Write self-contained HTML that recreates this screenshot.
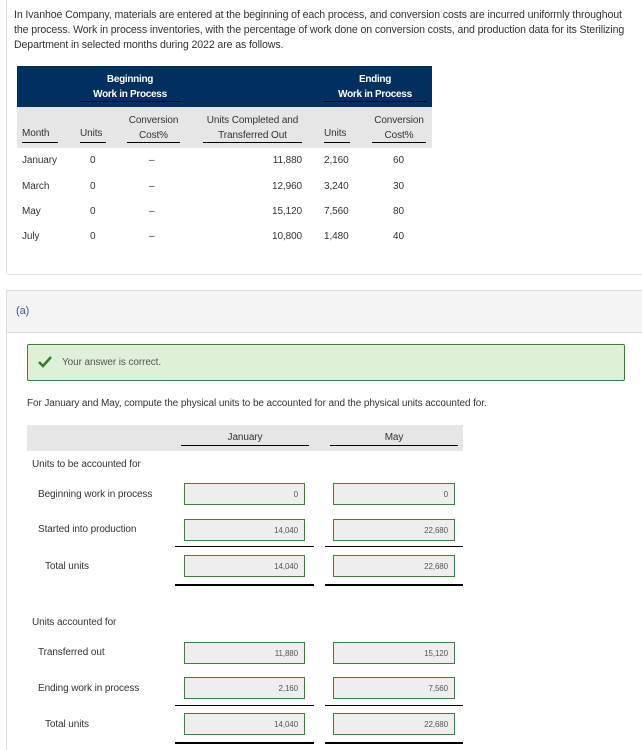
<!DOCTYPE html>
<html><head><meta charset="utf-8"><style>
*{margin:0;padding:0;box-sizing:border-box}
body{width:642px;height:747px;background:#fff;font-family:"Liberation Sans",sans-serif;color:#333;position:relative;overflow:hidden;font-size:10px;letter-spacing:-0.1px}
.a{position:absolute;white-space:nowrap}
.card1{position:absolute;left:6px;top:-2px;width:640px;height:277px;border:1px solid #ddd;border-radius:3px}
.hd{position:absolute;left:17px;top:66px;width:415px;height:41px;background:#00305f}
.sub{position:absolute;left:17px;top:107px;width:415px;height:41px;background:#e6e6e6}
.w{color:#fff;font-weight:bold;text-align:center;letter-spacing:-0.3px}
.ul{position:absolute;height:1px;background:#000}
.inp{position:absolute;height:22px;background:#eee;border:1px solid #3f7f3f;font-size:8px;color:#555;text-align:right;padding-right:6px;line-height:21px}
</style></head><body>
<div class="card1"></div>
<div class="a" style="left:14px;top:8px;line-height:15px;font-size:10.6px;letter-spacing:-0.12px">In Ivanhoe Company, materials are entered at the beginning of each process, and conversion costs are incurred uniformly throughout<br>the process. Work in process inventories, with the percentage of work done on conversion costs, and production data for its Sterilizing<br>Department in selected months during 2022 are as follows.</div>
<div class="hd"></div><div class="sub"></div>
<div class="a w" style="left:80px;top:72px;width:100px;line-height:15px">Beginning<br>Work in Process</div>
<div class="ul" style="left:80px;top:101px;width:100px;background:#000"></div>
<div class="a w" style="left:324px;top:72px;width:102px;line-height:15px">Ending<br>Work in Process</div>
<div class="ul" style="left:324px;top:101px;width:102px"></div>
<div class="a" style="left:22px;top:128px">Month</div><div class="ul" style="left:22px;top:142px;width:36px"></div>
<div class="a" style="left:80px;top:128px">Units</div><div class="ul" style="left:80px;top:142px;width:26px"></div>
<div class="a" style="left:127px;top:113px;width:53px;text-align:center;line-height:15px">Conversion<br>Cost%</div><div class="ul" style="left:127px;top:142px;width:53px"></div>
<div class="a" style="left:203px;top:113px;width:99px;text-align:center;line-height:15px">Units Completed and<br>Transferred Out</div><div class="ul" style="left:203px;top:142px;width:99px"></div>
<div class="a" style="left:324px;top:128px">Units</div><div class="ul" style="left:324px;top:142px;width:26px"></div>
<div class="a" style="left:372px;top:113px;width:54px;text-align:center;line-height:15px">Conversion<br>Cost%</div><div class="ul" style="left:372px;top:142px;width:54px"></div>
<div class="a" style="left:22px;top:155px">January</div><div class="a" style="left:90px;top:155px">0</div><div class="a" style="left:149px;top:155px">–</div><div class="a" style="left:200px;top:155px;width:102px;text-align:right">11,880</div><div class="a" style="left:324px;top:155px">2,160</div><div class="a" style="left:393px;top:155px">60</div>
<div class="a" style="left:22px;top:181px">March</div><div class="a" style="left:90px;top:181px">0</div><div class="a" style="left:149px;top:181px">–</div><div class="a" style="left:200px;top:181px;width:102px;text-align:right">12,960</div><div class="a" style="left:324px;top:181px">3,240</div><div class="a" style="left:393px;top:181px">30</div>
<div class="a" style="left:22px;top:206px">May</div><div class="a" style="left:90px;top:206px">0</div><div class="a" style="left:149px;top:206px">–</div><div class="a" style="left:200px;top:206px;width:102px;text-align:right">15,120</div><div class="a" style="left:324px;top:206px">7,560</div><div class="a" style="left:393px;top:206px">80</div>
<div class="a" style="left:22px;top:231px">July</div><div class="a" style="left:90px;top:231px">0</div><div class="a" style="left:149px;top:231px">–</div><div class="a" style="left:200px;top:231px;width:102px;text-align:right">10,800</div><div class="a" style="left:324px;top:231px">1,480</div><div class="a" style="left:393px;top:231px">40</div>

<div style="position:absolute;left:6px;top:290px;width:640px;height:460px;border-left:1px solid #ddd;border-top:1px solid #ddd"></div>
<div style="position:absolute;left:7px;top:291px;width:640px;height:42px;background:#f4f4f4;border-bottom:1px solid #ddd"></div>
<div class="a" style="left:16px;top:305px;font-size:11px;color:#3a5a8a">(a)</div>
<div style="position:absolute;left:27px;top:344px;width:598px;height:37px;background:#dff0d8;border:1px solid #3c7d3c;border-radius:2px"></div>
<svg style="position:absolute;left:38px;top:356px" width="14" height="12" viewBox="0 0 14 12"><path d="M1 6 L5 10 L13 1" fill="none" stroke="#3b7a2e" stroke-width="2.6"/></svg>
<div class="a" style="left:62px;top:357px;color:#555">Your answer is correct.</div>
<div class="a" style="left:27px;top:398px">For January and May, compute the physical units to be accounted for and the physical units accounted for.</div>
<div style="position:absolute;left:27px;top:425px;width:436px;height:26px;background:#e6e6e6"></div>
<div class="a" style="left:181px;top:432px;width:128px;text-align:center">January</div><div class="ul" style="left:181px;top:445px;width:128px"></div>
<div class="a" style="left:330px;top:432px;width:128px;text-align:center">May</div><div class="ul" style="left:330px;top:445px;width:128px"></div>
<div class="a" style="left:32px;top:459px">Units to be accounted for</div>
<div class="a" style="left:38px;top:489px">Beginning work in process</div>
<div class="inp" style="left:184px;top:483px;width:121px">0</div><div class="inp" style="left:333px;top:483px;width:122px">0</div>
<div class="a" style="left:38px;top:524px">Started into production</div>
<div class="inp" style="left:184px;top:519px;width:121px">14,040</div><div class="inp" style="left:333px;top:519px;width:122px">22,680</div>
<div class="ul" style="left:175px;top:546px;width:139px"></div><div class="ul" style="left:325px;top:546px;width:138px"></div>
<div class="a" style="left:45px;top:561px">Total units</div>
<div class="inp" style="left:184px;top:555px;width:121px">14,040</div><div class="inp" style="left:333px;top:555px;width:122px">22,680</div>
<div class="ul" style="left:175px;top:584px;width:139px;height:2px"></div><div class="ul" style="left:325px;top:584px;width:138px;height:2px"></div>
<div class="a" style="left:32px;top:617px">Units accounted for</div>
<div class="a" style="left:38px;top:647px">Transferred out</div>
<div class="inp" style="left:184px;top:642px;width:121px">11,880</div><div class="inp" style="left:333px;top:642px;width:122px">15,120</div>
<div class="a" style="left:38px;top:683px">Ending work in process</div>
<div class="inp" style="left:184px;top:677px;width:121px">2,160</div><div class="inp" style="left:333px;top:677px;width:122px">7,560</div>
<div class="ul" style="left:175px;top:705px;width:139px"></div><div class="ul" style="left:325px;top:705px;width:138px"></div>
<div class="a" style="left:45px;top:719px">Total units</div>
<div class="inp" style="left:184px;top:713px;width:121px">14,040</div><div class="inp" style="left:333px;top:713px;width:122px">22,680</div>
<div class="ul" style="left:175px;top:742px;width:139px;height:2px"></div><div class="ul" style="left:325px;top:742px;width:138px;height:2px"></div>
</body></html>
